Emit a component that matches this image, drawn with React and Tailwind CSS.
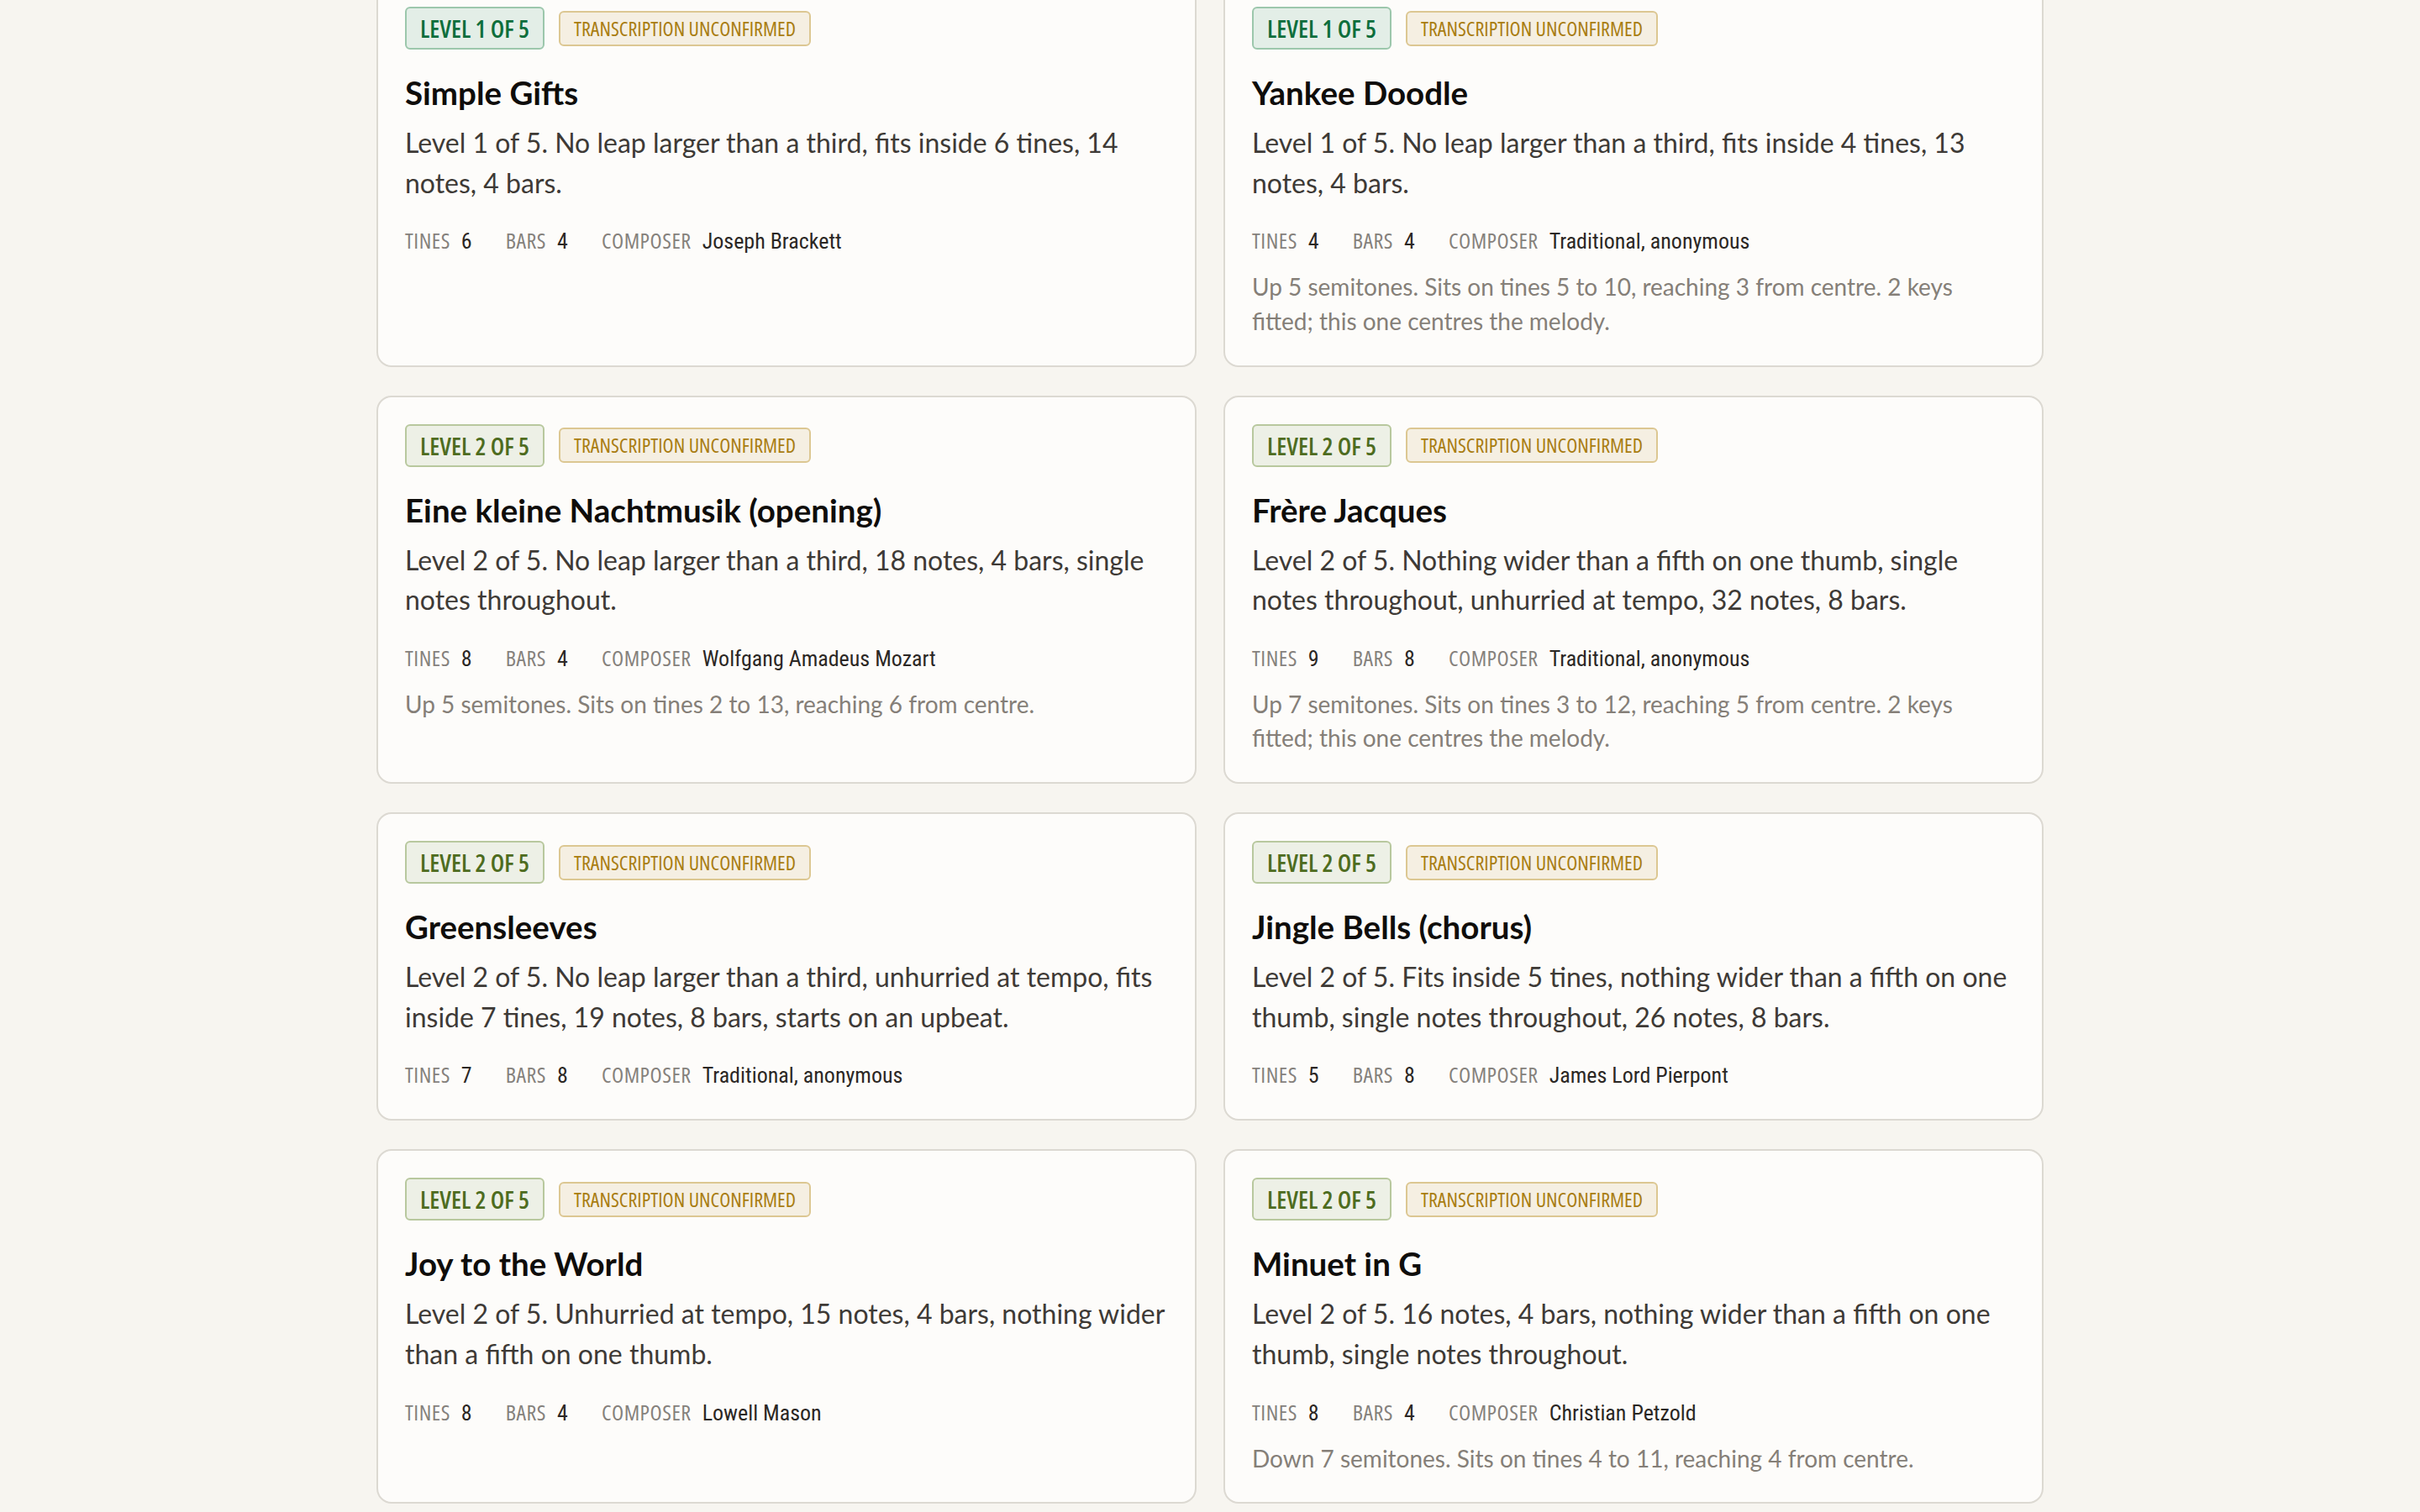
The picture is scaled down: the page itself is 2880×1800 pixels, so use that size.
import React from "react";

const songs = [
  {
    level: 1,
    title: "Simple Gifts",
    desc: "Level 1 of 5. No leap larger than a third, fits inside 6 tines, 14 notes, 4 bars.",
    tines: 6,
    bars: 4,
    composer: "Joseph Brackett",
  },
  {
    level: 1,
    title: "Yankee Doodle",
    desc: "Level 1 of 5. No leap larger than a third, fits inside 4 tines, 13 notes, 4 bars.",
    tines: 4,
    bars: 4,
    composer: "Traditional, anonymous",
    note: "Up 5 semitones. Sits on tines 5 to 10, reaching 3 from centre. 2 keys fitted; this one centres the melody.",
  },
  {
    level: 2,
    title: "Eine kleine Nachtmusik (opening)",
    desc: "Level 2 of 5. No leap larger than a third, 18 notes, 4 bars, single notes throughout.",
    tines: 8,
    bars: 4,
    composer: "Wolfgang Amadeus Mozart",
    note: "Up 5 semitones. Sits on tines 2 to 13, reaching 6 from centre.",
  },
  {
    level: 2,
    title: "Frère Jacques",
    desc: "Level 2 of 5. Nothing wider than a fifth on one thumb, single notes throughout, unhurried at tempo, 32 notes, 8 bars.",
    tines: 9,
    bars: 8,
    composer: "Traditional, anonymous",
    note: "Up 7 semitones. Sits on tines 3 to 12, reaching 5 from centre. 2 keys fitted; this one centres the melody.",
  },
  {
    level: 2,
    title: "Greensleeves",
    desc: "Level 2 of 5. No leap larger than a third, unhurried at tempo, fits inside 7 tines, 19 notes, 8 bars, starts on an upbeat.",
    tines: 7,
    bars: 8,
    composer: "Traditional, anonymous",
  },
  {
    level: 2,
    title: "Jingle Bells (chorus)",
    desc: "Level 2 of 5. Fits inside 5 tines, nothing wider than a fifth on one thumb, single notes throughout, 26 notes, 8 bars.",
    tines: 5,
    bars: 8,
    composer: "James Lord Pierpont",
  },
  {
    level: 2,
    title: "Joy to the World",
    desc: "Level 2 of 5. Unhurried at tempo, 15 notes, 4 bars, nothing wider than a fifth on one thumb.",
    tines: 8,
    bars: 4,
    composer: "Lowell Mason",
  },
  {
    level: 2,
    title: "Minuet in G",
    desc: "Level 2 of 5. 16 notes, 4 bars, nothing wider than a fifth on one thumb, single notes throughout.",
    tines: 8,
    bars: 4,
    composer: "Christian Petzold",
    note: "Down 7 semitones. Sits on tines 4 to 11, reaching 4 from centre.",
  },
];

function LevelBadge({ level }) {
  if (level === 1) {
    return (
      <span className="inline-block rounded-[6px] border-2 border-[#9cc7ac] bg-[#e3eee7] px-[16px] py-[6px] text-[29px] leading-[35px] font-semibold text-[#0e6e3c] font-['Open_Sans',sans-serif] [font-stretch:75%]">
        LEVEL 1 OF 5
      </span>
    );
  }
  return (
    <span className="inline-block rounded-[6px] border-2 border-[#b8c89e] bg-[#edf0e6] px-[16px] py-[6px] text-[29px] leading-[35px] font-semibold text-[#4e6c1f] font-['Open_Sans',sans-serif] [font-stretch:75%]">
      LEVEL {level} OF 5
    </span>
  );
}

function Meta({ label, value }) {
  return (
    <span className="flex items-baseline gap-[13px]">
      <span className="tracking-[0.02em] text-[#85817c]">{label}</span>
      <span className="text-[26px] leading-[39px] font-normal text-[#2b2724] font-['Roboto_Condensed','Roboto',sans-serif]">{value}</span>
    </span>
  );
}

function Card({ s }) {
  return (
    <div className="flex flex-col rounded-[18px] border-2 border-[#dcd9d2] bg-[#fdfcfa] p-[32px]">
      <div className="flex items-center gap-[17px]">
        <LevelBadge level={s.level} />
        <span className="inline-block rounded-[6px] border-2 border-[#dcc792] bg-[#f5efe2] px-[16px] py-[4px] text-[24px] leading-[30px] text-[#a97d12] font-['Open_Sans',sans-serif] [font-stretch:75%]">
          TRANSCRIPTION UNCONFIRMED
        </span>
      </div>
      <h2 className="mt-[29px] text-[38.5px] leading-[45px] font-bold text-[#0f0d0b] font-['Lato',sans-serif]">
        {s.title}
      </h2>
      <p className="mt-[13px] text-[32px] leading-[47.6px] text-[#3e3a36] font-['Lato',sans-serif]">
        {s.desc}
      </p>
      <div className="mt-[24px] flex items-baseline gap-[40px] text-[26px] leading-[42px] font-['Open_Sans',sans-serif] [font-stretch:75%]">
        <Meta label="TINES" value={s.tines} />
        <Meta label="BARS" value={s.bars} />
        <Meta label="COMPOSER" value={s.composer} />
      </div>
      {s.note && (
        <p className="mt-[14px] text-[28px] leading-[40.7px] text-[#857f78] font-['Lato',sans-serif]">
          {s.note}
        </p>
      )}
    </div>
  );
}

export default function App() {
  return (
    <div className="min-h-screen bg-[#f7f5f0] pb-[64px]">
      <div className="mx-auto -mt-[26px] grid w-[1984px] grid-cols-2 gap-x-[32px] gap-y-[34px]">
        {songs.map((s) => (
          <Card key={s.title} s={s} />
        ))}
      </div>
    </div>
  );
}
